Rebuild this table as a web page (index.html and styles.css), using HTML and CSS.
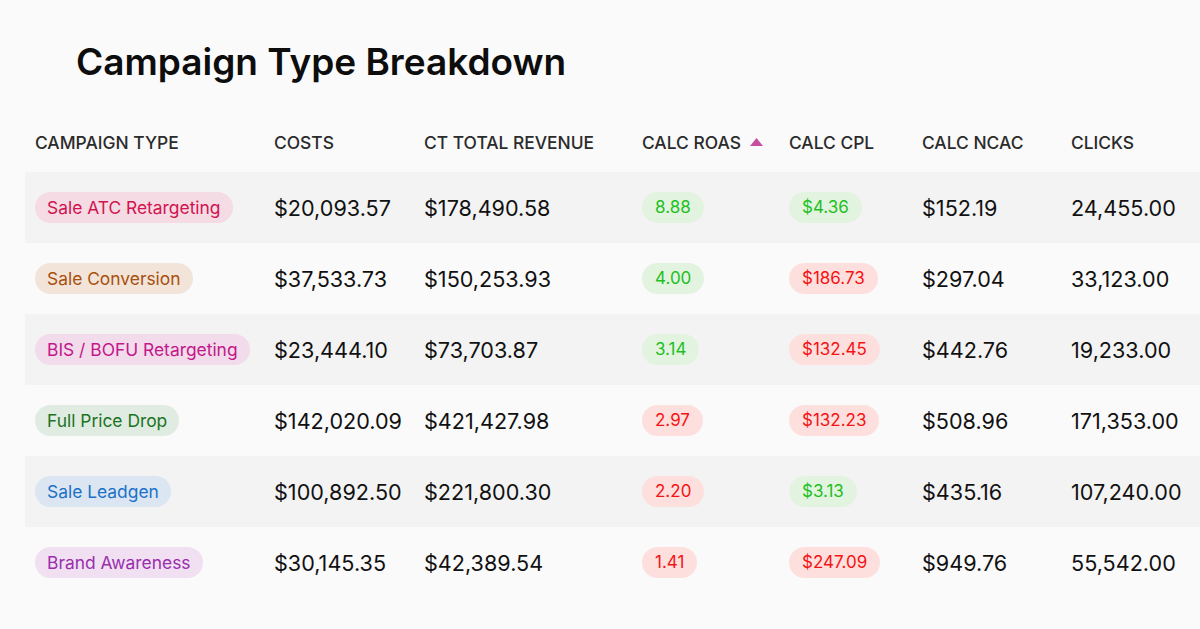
FILE: index.html
```html
<!DOCTYPE html>
<html lang="en">
<head>
<meta charset="utf-8">
<title>Campaign Type Breakdown</title>
<link rel="stylesheet" href="styles.css">
</head>
<body>
<main class="page">
  <h1 class="title">Campaign Type Breakdown</h1>
  <div class="table-wrap">
    <table class="grid">
      <colgroup>
        <col class="c1"><col class="c2"><col class="c3"><col class="c4"><col class="c5"><col class="c6"><col class="c7">
      </colgroup>
      <thead>
        <tr>
          <th>CAMPAIGN TYPE</th>
          <th>COSTS</th>
          <th>CT TOTAL REVENUE</th>
          <th><span class="sort">CALC ROAS <svg class="caret" width="13" height="8" viewBox="0 0 13 8"><path d="M6.5 0 L13 8 L0 8 Z" fill="#c64fa2"/></svg></span></th>
          <th>CALC CPL</th>
          <th>CALC NCAC</th>
          <th>CLICKS</th>
        </tr>
      </thead>
      <tbody>
        <tr>
          <td><span class="tag pink">Sale ATC Retargeting</span></td>
          <td>$20,093.57</td>
          <td>$178,490.58</td>
          <td><span class="chip good">8.88</span></td>
          <td><span class="chip good">$4.36</span></td>
          <td>$152.19</td>
          <td>24,455.00</td>
        </tr>
        <tr>
          <td><span class="tag brown">Sale Conversion</span></td>
          <td>$37,533.73</td>
          <td>$150,253.93</td>
          <td><span class="chip good">4.00</span></td>
          <td><span class="chip bad">$186.73</span></td>
          <td>$297.04</td>
          <td>33,123.00</td>
        </tr>
        <tr>
          <td><span class="tag magenta">BIS / BOFU Retargeting</span></td>
          <td>$23,444.10</td>
          <td>$73,703.87</td>
          <td><span class="chip good">3.14</span></td>
          <td><span class="chip bad">$132.45</span></td>
          <td>$442.76</td>
          <td>19,233.00</td>
        </tr>
        <tr>
          <td><span class="tag green">Full Price Drop</span></td>
          <td>$142,020.09</td>
          <td>$421,427.98</td>
          <td><span class="chip bad">2.97</span></td>
          <td><span class="chip bad">$132.23</span></td>
          <td>$508.96</td>
          <td>171,353.00</td>
        </tr>
        <tr>
          <td><span class="tag blue">Sale Leadgen</span></td>
          <td>$100,892.50</td>
          <td>$221,800.30</td>
          <td><span class="chip bad">2.20</span></td>
          <td><span class="chip good">$3.13</span></td>
          <td>$435.16</td>
          <td>107,240.00</td>
        </tr>
        <tr>
          <td><span class="tag purple">Brand Awareness</span></td>
          <td>$30,145.35</td>
          <td>$42,389.54</td>
          <td><span class="chip bad">1.41</span></td>
          <td><span class="chip bad">$247.09</span></td>
          <td>$949.76</td>
          <td>55,542.00</td>
        </tr>
      </tbody>
    </table>
  </div>
</main>
</body>
</html>
```
FILE: styles.css
```css
html, body {
  margin: 0;
  padding: 0;
  background: #fafafa;
  overflow: hidden;
}
body {
  font-family: Inter, "Noto Sans", "Liberation Sans", sans-serif;
  color: #111;
}
.page {
  width: 1200px;
  height: 629px;
  overflow: hidden;
}
.title {
  margin: 0;
  padding: 39px 0 0 76px;
  font-size: 37px;
  line-height: 45px;
  font-weight: 600;
  color: #0d0d0d;
}
.table-wrap {
  padding: 24px 0 0 25px;
  width: 1400px;
}
.grid {
  border-collapse: collapse;
  table-layout: fixed;
  width: 1186px;
}
.c1 { width: 239px; }
.c2 { width: 150px; }
.c3 { width: 218px; }
.c4 { width: 147px; }
.c5 { width: 133px; }
.c6 { width: 149px; }
.c7 { width: 150px; }
.grid th {
  text-align: left;
  font-size: 17.4px;
  line-height: 20px;
  font-weight: 500;
  color: #2b2b2b;
  height: 45px;
  vertical-align: bottom;
  padding: 0 0 19px 10px;
  white-space: nowrap;
}
.sort {
  display: inline-flex;
  align-items: center;
}
.caret {
  margin-left: 9px;
  margin-top: -3px;
}
.grid td {
  height: 71px;
  padding: 0 0 0 10px;
  font-size: 21.6px;
  white-space: nowrap;
  color: #111;
}
.grid tbody tr:nth-child(odd) td {
  background: #f3f3f3;
}
.tag, .chip {
  display: inline-block;
  height: 31px;
  line-height: 31px;
  border-radius: 16px;
  font-size: 17.4px;
  padding: 0 12px;
  vertical-align: middle;
}
.chip {
  font-size: 17px;
  padding: 0 13px;
}
.pink { background: #f5dbe3; color: #d11350; }
.brown { background: #f3e4da; color: #a8500e; }
.magenta { background: #f2dbeb; color: #c2188a; }
.green { background: #e0ebe1; color: #1a7424; }
.blue { background: #dce6f2; color: #1a72c8; }
.purple { background: #f0e0f1; color: #9a2eae; }
.good { background: #e2f4e0; color: #1fbf1f; }
.bad { background: #fde0de; color: #f51313; }
```
